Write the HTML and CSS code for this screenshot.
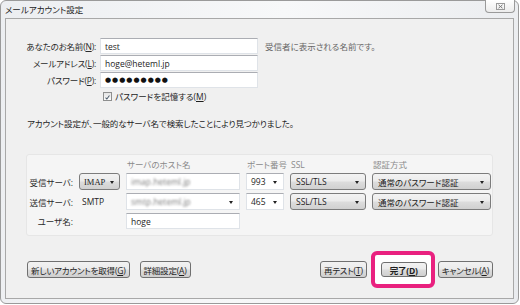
FILE: index.html
```html
<!DOCTYPE html>
<html lang="ja">
<head>
  <meta charset="utf-8">
  <title>メールアカウント設定</title>
  <link rel="stylesheet" href="styles.css">
</head>
<body>
  <div class="window">
    <div class="titlebar">
      <span class="title">メールアカウント設定</span>
      <button class="close" aria-label="close">
        <svg width="9" height="7" viewBox="0 0 9 7">
          <rect x="0.5" y="0.5" width="8" height="6" fill="none" stroke="#9a9a9a"/>
          <path d="M2.5 1.8 L6.5 5.2 M6.5 1.8 L2.5 5.2" stroke="#7a7a7a" stroke-width="1"/>
        </svg>
      </button>
    </div>

    <div class="panel">
      <!-- identity -->
      <div class="identity">
        <span class="label">あなたのお名前(<u>N</u>):</span>
        <span class="field">test</span>
        <span class="hint">受信者に表示される名前です。</span>

        <span class="label">メールアドレス(<u>L</u>):</span>
        <span class="field">hoge@heteml.jp</span>
        <span></span>

        <span class="label">パスワード(<u>P</u>):</span>
        <span class="field dots">●●●●●●●●●</span>
        <span></span>

        <span></span>
        <span class="remember">
          <span class="check">
            <svg width="9" height="9" viewBox="0 0 9 9">
              <path d="M2 4.6 L3.7 6.5 L7 2" fill="none" stroke="#4a5a6a" stroke-width="1.3"/>
            </svg>
          </span>
          <span>パスワードを記憶する(<u>M</u>)</span>
        </span>
      </div>

      <p class="notice">アカウント設定が、一般的なサーバ名で検索したことにより見つかりました。</p>

      <!-- servers -->
      <div class="servers">
        <span></span><span></span>
        <span class="col">サーバのホスト名</span>
        <span class="col">ポート番号</span>
        <span class="col">SSL</span>
        <span class="col">認証方式</span>

        <span class="rowlabel">受信サーバ:</span>
        <span class="select proto">IMAP</span>
        <span class="field blur"><span>imap.heteml.jp</span></span>
        <span class="field combo">993</span>
        <span class="select">SSL/TLS</span>
        <span class="select">通常のパスワード認証</span>

        <span class="rowlabel">送信サーバ:</span>
        <span class="plain">SMTP</span>
        <span class="field combo blur"><span>smtp.heteml.jp</span></span>
        <span class="field combo">465</span>
        <span class="select">SSL/TLS</span>
        <span class="select">通常のパスワード認証</span>

        <span class="rowlabel">ユーザ名:</span>
        <span></span>
        <span class="field">hoge</span>
      </div>

      <!-- buttons -->
      <div class="actions">
        <div class="group">
          <button class="btn wide">新しいアカウントを取得(<u>G</u>)</button>
          <button class="btn">詳細設定(<u>A</u>)</button>
        </div>
        <div class="group">
          <button class="btn">再テスト(<u>T</u>)</button>
          <span class="highlight"><button class="btn done">完了(<u>D</u>)</button></span>
          <button class="btn">キャンセル(<u>A</u>)</button>
        </div>
      </div>
    </div>
  </div>
</body>
</html>
```

FILE: styles.css
```css
/* base */
* {
  margin: 0; padding: 0;
  box-sizing: border-box; }
body {
  background: #fff;
  font-family: "Open Sans", "Noto Sans CJK JP", sans-serif;
  font-size: 8.5px;
  font-feature-settings: "palt";
  color: #1e1e1e; }
u { text-decoration: underline; text-underline-offset: 1px; }

/* window frame */
.window {
  width: 519px; height: 304px;
  border: 1px solid #9a9a9a;
  border-radius: 6px;
  background: linear-gradient(100deg, #eceef1 0%, #f7f8f9 50%, #e9ebee 100%);
  display: flex;
  flex-direction: column; }
.titlebar {
  height: 17px;
  display: flex;
  justify-content: space-between;
  align-items: flex-start; }
.title {
  padding: 2px 0 0 4px;
  color: #222; }
.close {
  margin: -1px 3px 0 0;
  width: 30px; height: 13px;
  border: 1px solid #9a9a9a;
  border-top: none;
  border-radius: 0 0 4px 4px;
  background: linear-gradient(#ffffff, #ececec);
  display: flex;
  align-items: center;
  justify-content: center; }

/* client area */
.panel {
  flex: 1;
  margin: 0 4px 4px 4px;
  border: 1px solid #a8a8a8;
  background: #f0f0f0;
  padding: 19px 20px 0 20px; }

.identity {
  margin-left: -10px;
  display: grid;
  grid-template-columns: 80px 158px auto;
  grid-template-rows: 16px 16px 16px 10px;
  column-gap: 4px;
  row-gap: 1px;
  align-items: center; }
.label {
  text-align: right;
  white-space: nowrap;
  letter-spacing: -0.2px;
  color: #2a2a2a; }
.hint {
  padding-left: 3px;
  white-space: nowrap;
  color: #666; }
.remember {
  margin-top: 4px;
  padding-left: 3px;
  display: flex;
  align-items: center;
  gap: 3px;
  white-space: nowrap; }
.check {
  width: 9px; height: 9px;
  border: 1px solid #8e8f8f;
  background: linear-gradient(#e4e4e4, #fbfbfb);
  display: flex; }

.field {
  height: 100%;
  background: #fff;
  border: 1px solid #dfe3e8;
  border-top-color: #abadb3;
  padding: 0 4px;
  display: flex;
  align-items: center;
  position: relative;
  white-space: nowrap; }
.dots {
  font-family: "DejaVu Sans", sans-serif;
  font-size: 7px;
  letter-spacing: 1px;
  color: #111; }

.notice {
  margin: 19px 0 0 1px;
  line-height: 12px;
  letter-spacing: -0.1px; }

/* server table */
.servers {
  margin-top: 24px;
  width: 467px;
  padding: 3px 0 6px 0;
  background: #f5f5f5;
  border: 1px solid #e6e6e6;
  border-radius: 3px;
  display: grid;
  grid-template-columns: 46px 41px 114px 38px 76px 119px;
  grid-template-rows: 12px 17px 17px 16px;
  column-gap: 6px;
  row-gap: 3px;
  align-items: center;
  white-space: nowrap; }
.col {
  color: #8a8a8a;
  padding-left: 1px; }
.rowlabel {
  text-align: right;
  color: #2a2a2a; }
.plain { padding-left: 3px; }
.blur span {
  color: #7d7d7d;
  filter: blur(1px); }

.select {
  height: 100%;
  border: 1px solid #7c7c7c;
  border-radius: 3px;
  background: linear-gradient(#f3f3f3 0%, #ebebeb 48%, #dddddd 52%, #d0d0d0 100%);
  padding: 0 14px 0 5px;
  display: flex;
  align-items: center;
  position: relative;
  white-space: nowrap; }
.select.proto {
  font-family: "Liberation Serif", serif;
  font-size: 8.5px;
  padding-left: 4px; }
.select::after, .combo::after {
  content: "";
  position: absolute;
  right: 6px; top: 7px;
  border-left: 2.5px solid transparent;
  border-right: 2.5px solid transparent;
  border-top: 3px solid #222; }
.select.proto::after { right: 5px; }

/* bottom buttons */
.actions {
  margin-top: 15px;
  display: flex;
  justify-content: space-between;
  align-items: center;
  padding: 0 0 0 1px; }
.group {
  display: flex;
  align-items: center; }
.btn {
  height: 17px;
  padding: 0 3px;
  font: inherit;
  letter-spacing: -0.2px;
  color: #1e1e1e;
  border: 1px solid #707070;
  border-radius: 3px;
  background: linear-gradient(#f2f2f2 0%, #ebebeb 48%, #dddddd 52%, #cfcfcf 100%);
  white-space: nowrap; }
.btn.wide { margin-right: 10px; }
.group .btn { min-width: 45px; }
.highlight {
  margin: 0 3px 0 4px;
  padding: 7px 4px 7px 6px;
  border: 4px solid #e9217f;
  border-radius: 6px;
  background: #fff;
  display: flex; }
.btn.done {
  width: 46px;
  height: 15px;
  font-weight: bold; }
```
